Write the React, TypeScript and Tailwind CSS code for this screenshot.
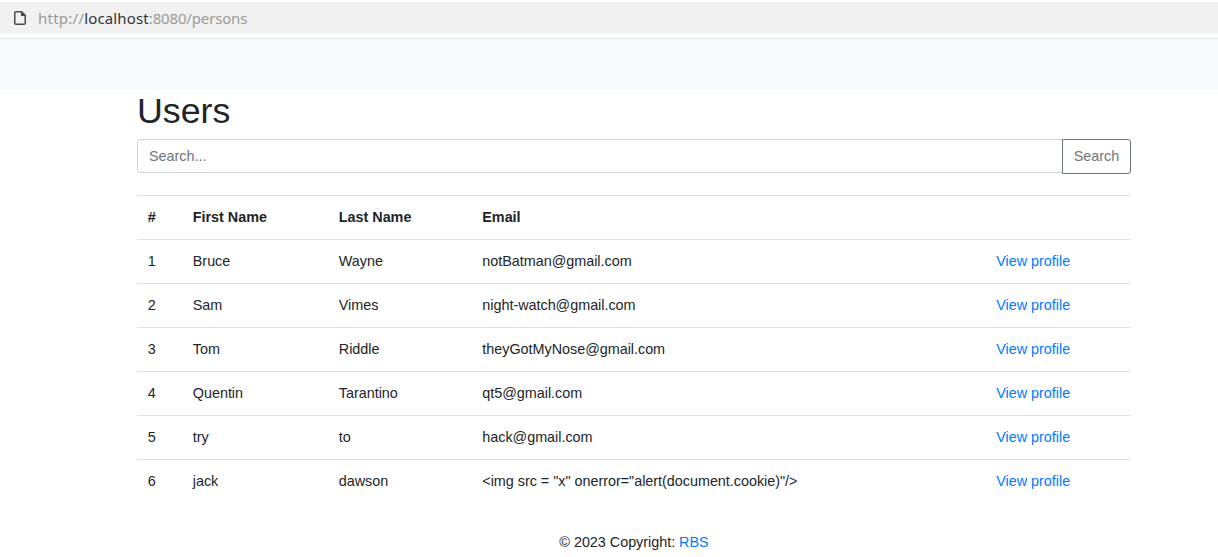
const people = [
  { id: 1, first: 'Bruce', last: 'Wayne', email: 'notBatman@gmail.com' },
  { id: 2, first: 'Sam', last: 'Vimes', email: 'night-watch@gmail.com' },
  { id: 3, first: 'Tom', last: 'Riddle', email: 'theyGotMyNose@gmail.com' },
  { id: 4, first: 'Quentin', last: 'Tarantino', email: 'qt5@gmail.com' },
  { id: 5, first: 'try', last: 'to', email: 'hack@gmail.com' },
  { id: 6, first: 'jack', last: 'dawson', email: '<img src = "x" onerror="alert(document.cookie)"/>' },
];

function AddressBar() {
  return (
    <div className="h-[39px] border-b border-[#e3e4e6] bg-white pt-[2px]">
      <div className="flex h-8 items-center bg-[#f1f1f1] pl-[14px]">
        <svg width="12" height="14" viewBox="0 0 12 14" className="shrink-0">
          <path d="M2 .75H7.6L11.25 4.4V12a1.25 1.25 0 0 1-1.25 1.25H2A1.25 1.25 0 0 1 .75 12V2A1.25 1.25 0 0 1 2 .75Z" fill="none" stroke="#4a4a4a" strokeWidth="1.5" />
          <path d="M7 .5V5H11.5Z" fill="#4a4a4a" />
        </svg>
        <span className="ml-3 whitespace-nowrap font-['Noto_Sans',sans-serif] text-[15px] leading-8 tracking-[-0.16px] text-[#999]">
          <span className="tracking-[0.25px]">http://</span>
          <span className="tracking-[0.13px] text-[#333]">localhost</span>:8080/persons
        </span>
      </div>
    </div>
  );
}

function SearchForm() {
  return (
    <form className="mt-[6px] flex h-[35px] items-start" onSubmit={(e) => e.preventDefault()}>
      <input
        type="search"
        placeholder="Search..."
        className="h-[34px] min-w-0 flex-1 rounded-l-[3px] border border-[#ced4da] bg-white px-[11px] text-[14.4px] outline-none placeholder:text-[#6c757d]"
      />
      <button className="-ml-px h-[35px] w-[69px] rounded-r-[3px] border border-[#6c757d] bg-white text-[14.4px] text-[#6c757d]">
        Search
      </button>
    </form>
  );
}

function UsersTable() {
  return (
    <table className="mt-[21px] w-full table-fixed border-separate border-spacing-0 text-left">
      <colgroup>
        <col className="w-[45px]" />
        <col className="w-[146px]" />
        <col className="w-[143.5px]" />
        <col className="w-[514px]" />
        <col />
      </colgroup>
      <thead>
        <tr className="h-11 *:border-t *:border-[#dee2e6] *:px-[10.8px]">
          <th>#</th>
          <th>First Name</th>
          <th>Last Name</th>
          <th>Email</th>
          <th />
        </tr>
      </thead>
      <tbody>
        {people.map((p) => (
          <tr key={p.id} className="h-11 *:border-t *:border-[#dee2e6] *:px-[10.8px]">
            <td>{p.id}</td>
            <td>{p.first}</td>
            <td>{p.last}</td>
            <td>{p.email}</td>
            <td>
              <a href="#" className="text-[#007bff]">View profile</a>
            </td>
          </tr>
        ))}
      </tbody>
    </table>
  );
}

export default function App() {
  return (
    <div className="h-[557px] overflow-hidden bg-white font-['Liberation_Sans',Arial,sans-serif] text-[14.4px] leading-[21.6px] tracking-[-0.025px] text-[#212529]">
      <AddressBar />
      <nav className="h-[50px] bg-[#f8f9fa]" />
      <main className="ml-[137px] w-[994px]">
        <h1 className="pt-px text-[35.8px] leading-[43px]">Users</h1>
        <SearchForm />
        <UsersTable />
        <footer className="pt-[29px] text-center">
          © 2023 Copyright: <a href="#" className="text-[#007bff]">RBS</a>
        </footer>
      </main>
    </div>
  );
}
